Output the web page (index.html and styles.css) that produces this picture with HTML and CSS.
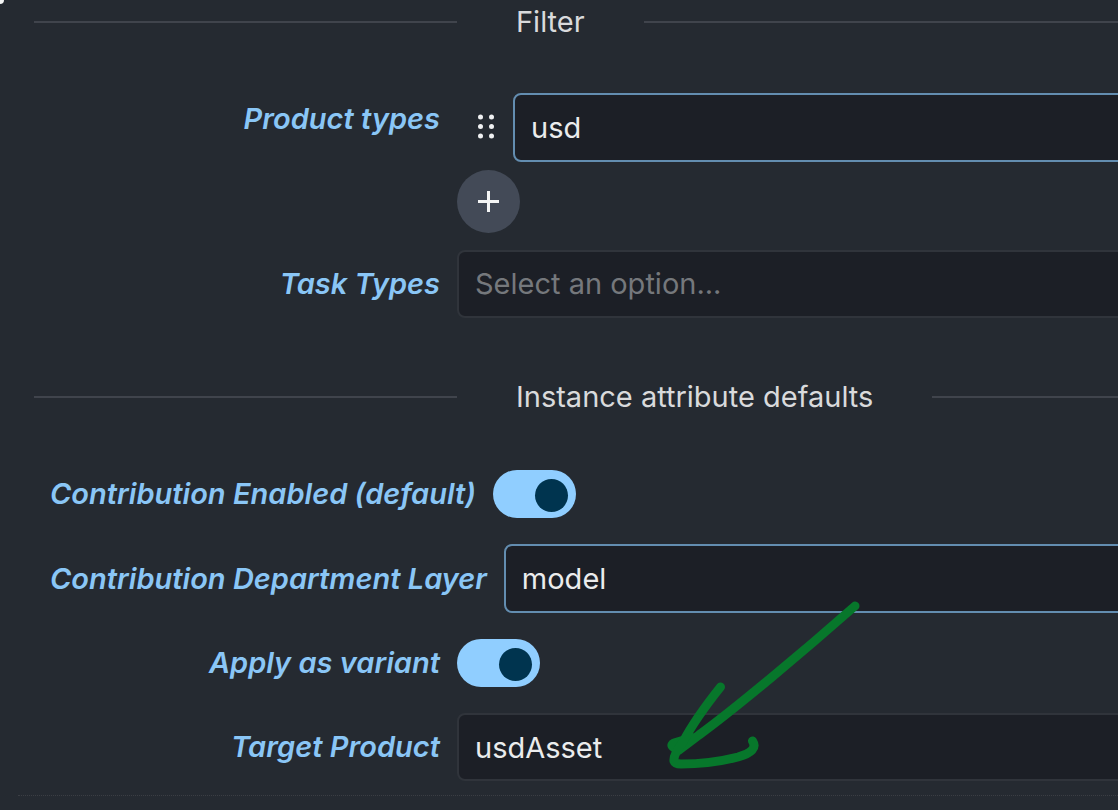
FILE: index.html
```
<!DOCTYPE html>
<html lang="en">
<head>
<meta charset="utf-8">
<title>Contribution profile</title>
<link rel="stylesheet" href="styles.css">
</head>
<body>
<span class="bullet"></span>
<form class="profile">
<h2 class="divider"><span>Filter</span></h2>
<div class="row top">
<label for="product">Product types</label>
<div class="list">
<div class="item">
<svg class="grip" width="18" height="27" viewBox="0 0 18 27" fill="#f0f1f2">
<circle cx="3.5" cy="3" r="2.5"/><circle cx="14.500" cy="3" r="2.5"/>
<circle cx="3.5" cy="12.500" r="2.5"/><circle cx="14.500" cy="12.500" r="2.5"/>
<circle cx="3.5" cy="22" r="2.5"/><circle cx="14.500" cy="22" r="2.5"/>
</svg>
<input class="field changed" id="product" value="usd">
</div>
<button class="add" type="button" aria-label="Add">
<svg width="22" height="22" viewBox="0 0 22 22" stroke="#f4f5f5" stroke-width="3">
<path d="M0 10.500H21M10.500 0V21"/>
</svg>
</button>
</div>
</div>
<div class="row">
<label for="tasks">Task Types</label>
<select class="field empty" id="tasks"><option>Select an option...</option></select>
</div>
<h2 class="divider"><span>Instance attribute defaults</span></h2>
<div class="row">
<label for="enabled">Contribution Enabled (default)</label>
<input class="switch" type="checkbox" id="enabled" checked>
</div>
<div class="row">
<label for="layer">Contribution Department Layer</label>
<select class="field changed" id="layer"><option>model</option></select>
</div>
<div class="row">
<label for="variant">Apply as variant</label>
<input class="switch" type="checkbox" id="variant" checked>
</div>
<div class="row">
<label for="target">Target Product</label>
<div class="marked">
<input class="field" id="target" value="usdAsset">
<!-- hand-drawn arrow pointing at the product name -->
<svg class="arrow" width="240" height="200" viewBox="0 0 240 200" fill="none" stroke="#07772b" stroke-width="9" stroke-linecap="round" stroke-linejoin="round">
<path d="M215 26C164 71 96 128 59 155Q46 165 39 170Q28 166 34 163L44 160L51 157L38 166"/>
<path d="M80.500 107Q55 139 43 162Q33 175 34 181Q35 184 41 184Q70 184 98 177Q119 171 112.500 161"/>
</svg>
</div>
</div>
</form>
</body>
</html>
```

FILE: styles.css
```
* {
  box-sizing: border-box;
}
body {
  margin: 0;
  overflow: hidden;
  background: #252a31;
  color: #d9dadc;
  font: 29px/38px Inter, sans-serif;
}
.bullet {
  position: absolute;
  top: -4px;
  left: -4px;
  width: 8px;
  height: 8px;
  border-radius: 50%;
  background: #f4f5f5;
}
/* fields run on past the right edge of the panel */
.profile {
  display: flex;
  flex-direction: column;
  gap: 16px;
  margin: 0 -24px 0 18px;
  padding: 3px 0 14px 16px;
  border-bottom: 1px dotted #3b3e44;
}
.divider {
  display: flex;
  align-items: center;
  gap: 59px;
  margin: 44px 0 28px;
  font-size: 29px;
  font-weight: 400;
}
.divider:first-child {
  margin-top: 0;
}
.divider::before, .divider::after {
  content: "";
  height: 2px;
  background: #40444c;
}
.divider::before {
  width: 423px;
}
.divider::after {
  flex: 1;
}
.row {
  display: flex;
  align-items: center;
  gap: 17px;
  min-height: 68px;
  padding-left: 16px;
}
.row.top {
  align-items: flex-start;
}
.row label {
  flex: none;
  min-width: 390px;
  color: #8ac6f6;
  font-style: italic;
  font-weight: 600;
  text-align: right;
}
.top label {
  line-height: 68px;
}
.list {
  flex: 1;
  padding: 8px 0 1px;
}
.item {
  display: flex;
  align-items: center;
  gap: 18px;
  margin-bottom: 8px;
  padding-left: 20px;
}
.field {
  display: block;
  flex: 1;
  width: 100%;
  min-width: 0;
  height: 68px;
  padding: 0 16px;
  border: 2px solid #30343b;
  border-radius: 8px;
  appearance: none;
  background: #1c1f26;
  color: #ebeced;
  font: inherit;
}
.changed {
  height: 69px;
  border-color: #638db0;
}
.empty {
  color: #75787c;
}
.add {
  display: flex;
  align-items: center;
  justify-content: center;
  width: 63px;
  height: 63px;
  padding: 0;
  border: 0;
  border-radius: 50%;
  background: #434a57;
}
.switch {
  display: flex;
  align-items: center;
  justify-content: flex-end;
  width: 83px;
  height: 48px;
  margin: 0;
  padding: 2px 8px 0;
  border-radius: 24px;
  appearance: none;
  background: #90ceff;
}
.switch::before {
  content: "";
  width: 33px;
  height: 33px;
  border-radius: 50%;
  background: #00344f;
}
.marked {
  position: relative;
  flex: 1;
}
.arrow {
  position: absolute;
  left: 183px;
  bottom: 1px;
  pointer-events: none;
}
```
